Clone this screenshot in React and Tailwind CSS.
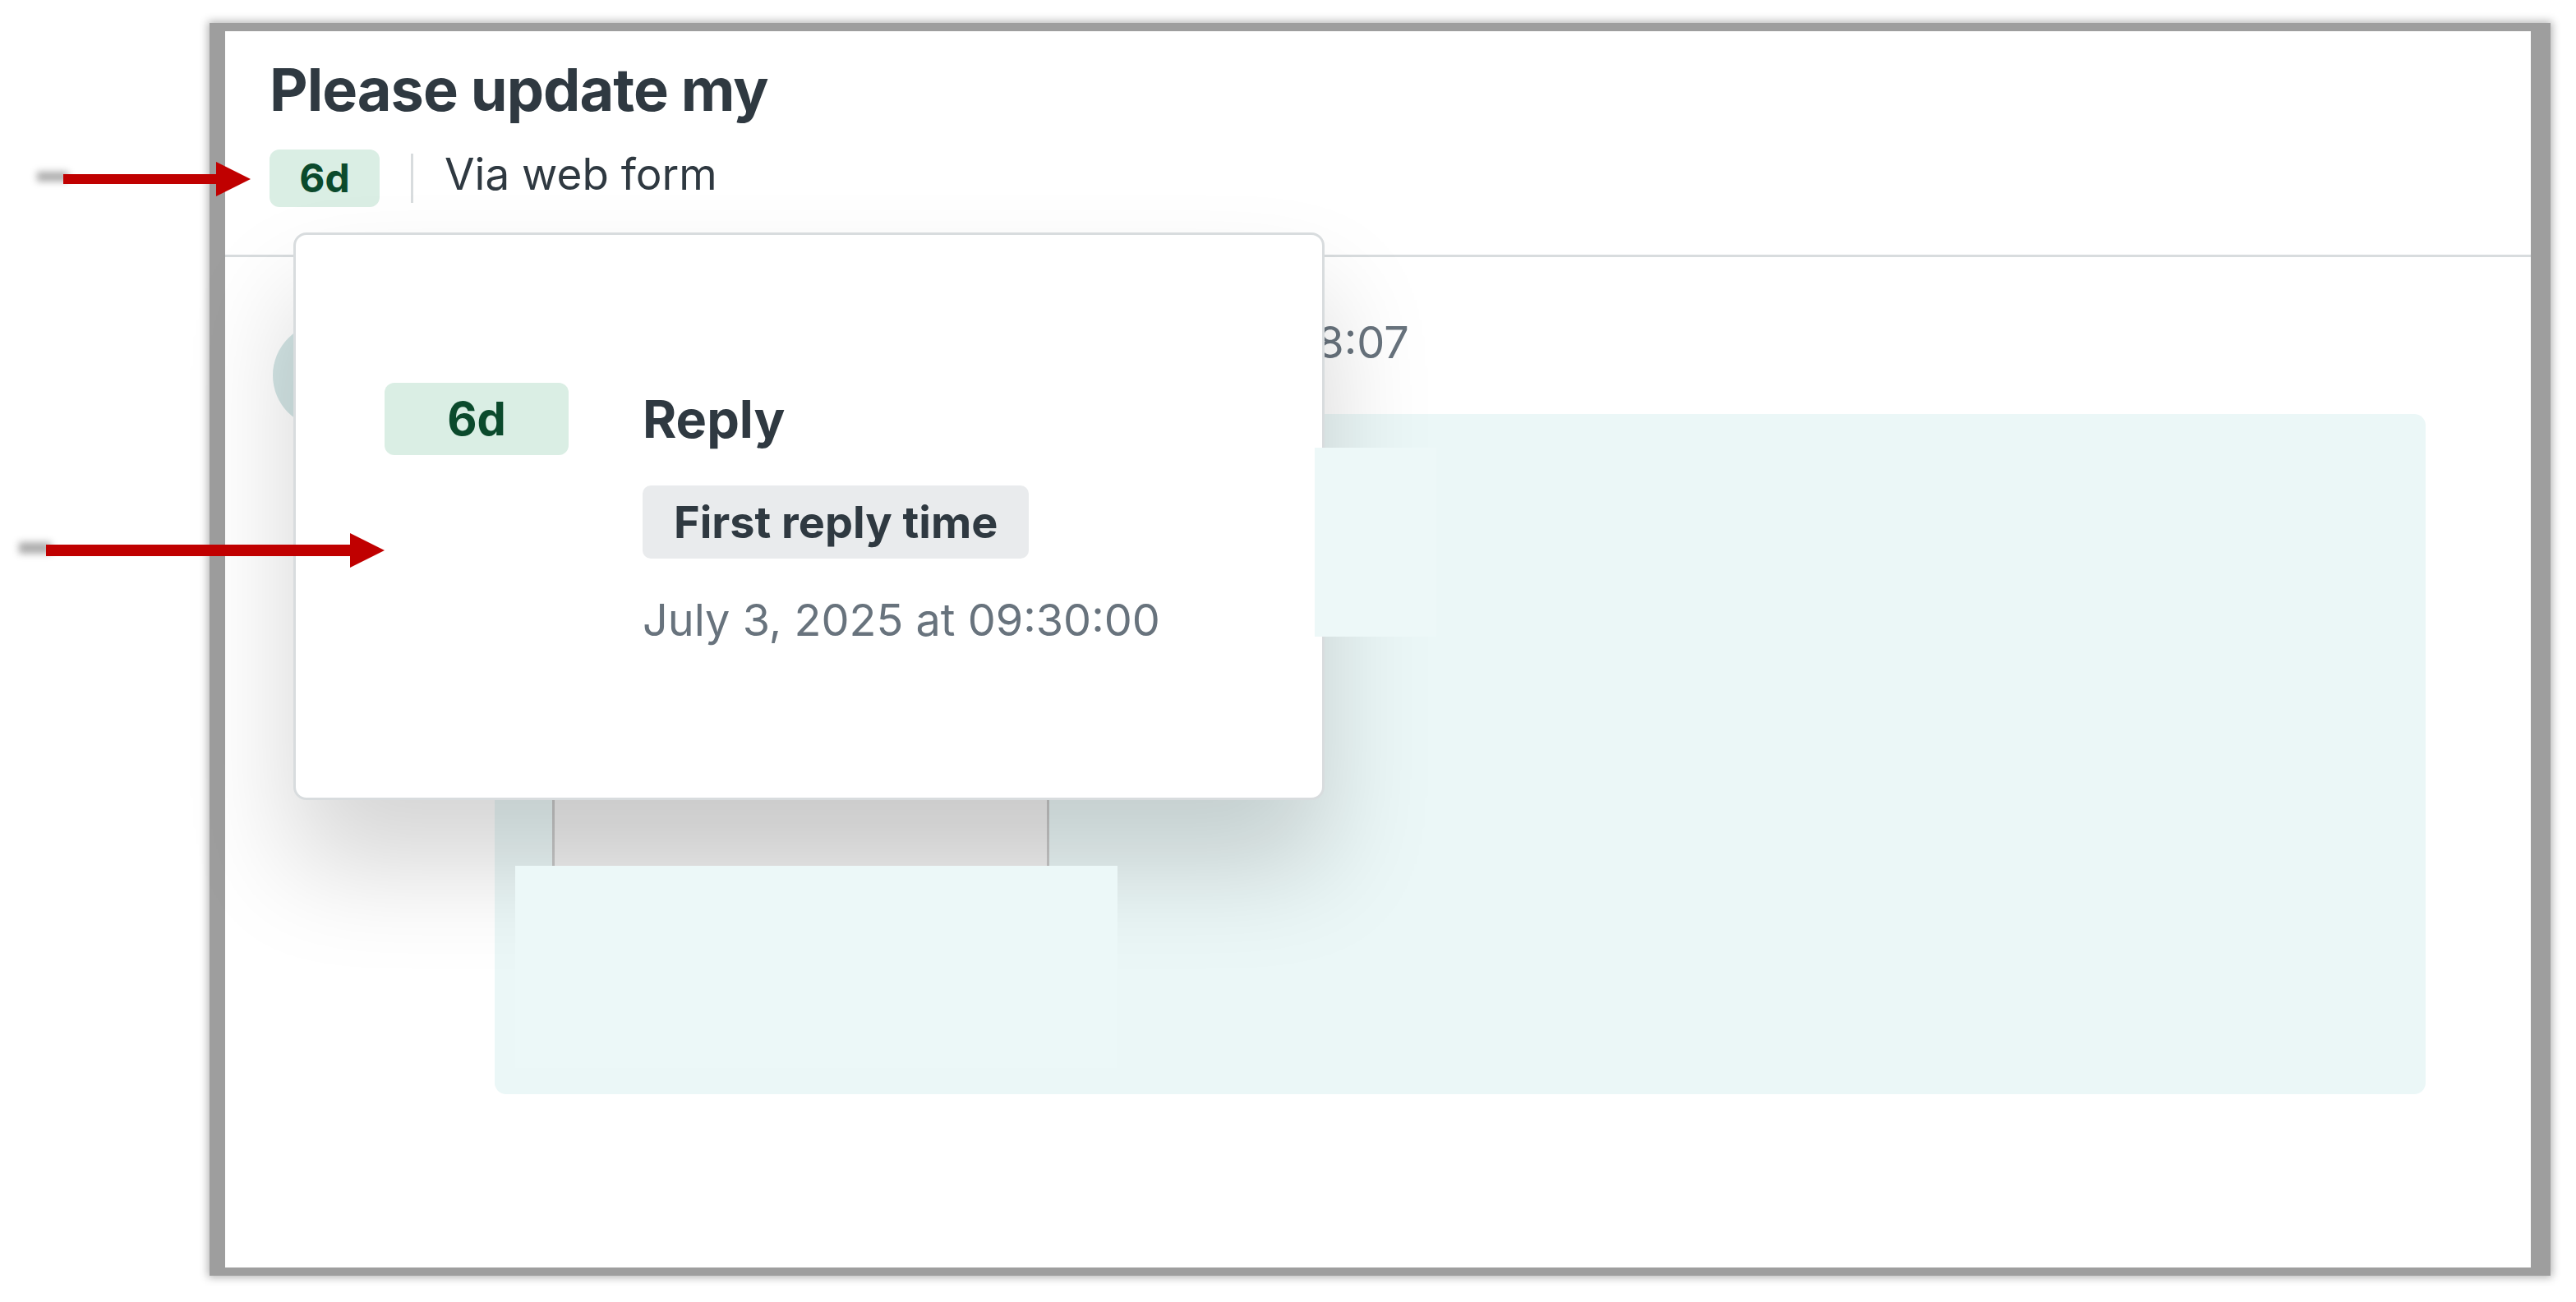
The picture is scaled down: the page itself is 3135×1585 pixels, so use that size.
const Arrow = ({ x1, x2, tip, y, shaft, head, tail }) => {
    const half = shaft / 2;
    const hh = head / 2;
    return (
        <svg className="absolute left-0 top-0 z-30 pointer-events-none" width="3135" height="1585">
            <defs>
                <filter id={`blur-${y}`} x="-50%" y="-200%" width="200%" height="500%">
                    <feGaussianBlur stdDeviation="4" />
                </filter>
            </defs>
            {/* soft shadow at the tail */}
            <rect x={tail} y={y - half - 3} width={x1 - tail + 6} height={shaft} fill="#8a8a8a" opacity="0.7" filter={`url(#blur-${y})`} />
            <rect x={x1} y={y - half} width={x2 - x1 + 1} height={shaft} fill="#c00000" />
            <polygon points={`${x2},${y - hh} ${tip},${y} ${x2},${y + hh}`} fill="#c00000" />
        </svg>
    );
};

export default function App() {
    return (
        <div className="relative w-[3135px] h-[1585px] bg-white overflow-hidden font-['Inter','Liberation_Sans',sans-serif] text-[#2f3941]">
            {/* Window frame */}
            <div className="ml-[255px] mt-[28px] w-[2849px] h-[1525px] border-[#9e9e9e] border-t-[10px] border-l-[19px] border-r-[24px] border-b-[10px] shadow-[0_0_10px_2px_rgba(0,0,0,0.3)]">
                <div className="relative w-full h-full bg-white flex flex-col">
                    {/* Ticket header */}
                    <div className="px-[54px] pt-[27px] pb-[58px] border-b-[3px] border-[#d8dcde]">
                        <h1 className="text-[72px] leading-[88px] font-bold tracking-[-1px]">Please update my</h1>
                        <div className="mt-[29px] flex items-center">
                            <span className="w-[134px] h-[70px] rounded-[12px] bg-[#daeee4] text-[#0b4a2c] text-[48px] font-bold flex items-center justify-center">6d</span>
                            <span className="mx-[38px] w-[3px] h-[60px] bg-[#d8dcde]" />
                            <span className="text-[53px] leading-[54px] mb-[10px]">Via web form</span>
                        </div>
                    </div>

                    {/* Conversation */}
                    <div className="flex pl-[58px] pr-[128px] pt-[71px] gap-[142px]">
                        <div className="mt-[9px] w-[128px] h-[128px] rounded-full bg-[#d3e5e5] shrink-0" />
                        <div className="flex-1">
                            <div className="flex items-baseline text-[54px] leading-[66px]">
                                <span className="font-bold">Requester</span>
                                <span className="ml-[394px] text-[#68737d]">Jul 3, 2025 08:07</span>
                            </div>
                            <div className="relative mt-[54px] h-[828px] rounded-[14px] bg-[#ebf7f7] pt-[96px]">
                                <div className="ml-[70px] w-[605px] h-[454px] bg-[#f1f1f1] border-x-[3px] border-[#c8c8c8]" />
                                <div className="relative z-20 ml-[25px] w-[733px] h-[246px] bg-[#ecf8f8]" />
                                <div className="absolute z-20 left-[998px] top-[41px] w-[148px] h-[230px] bg-[#edf8f8]" />
                            </div>
                        </div>
                    </div>

                    {/* SLA popover */}
                    <div className="absolute z-10 left-[83px] top-[245px] w-[1255px] h-[691px] bg-white rounded-[16px] border-[3px] border-[#d8dcde] shadow-[0_80px_130px_rgba(0,0,0,0.17)]">
                        <div className="flex items-start pl-[108px] pt-[180px]">
                            <span className="w-[224px] h-[88px] rounded-[12px] bg-[#daeee4] text-[#0b4a2c] text-[56px] font-bold flex items-center justify-center shrink-0">6d</span>
                            <div className="ml-[90px] mt-[4px] flex flex-col items-start">
                                <span className="text-[63px] leading-[80px] font-bold">Reply</span>
                                <span className="mt-[41px] h-[89px] px-[38px] rounded-[10px] bg-[#e9ebed] text-[54px] font-bold flex items-center">First reply time</span>
                                <span className="mt-[41px] text-[54px] leading-[68px] text-[#68737d]">July 3, 2025 at 09:30:00</span>
                            </div>
                        </div>
                    </div>
                </div>
            </div>

            {/* Annotation arrows */}
            <Arrow x1={77} x2={263} tip={305} y={218} shaft={12} head={42} tail={45} />
            <Arrow x1={56} x2={426} tip={468} y={670} shaft={14} head={42} tail={23} />
        </div>
    );
}
